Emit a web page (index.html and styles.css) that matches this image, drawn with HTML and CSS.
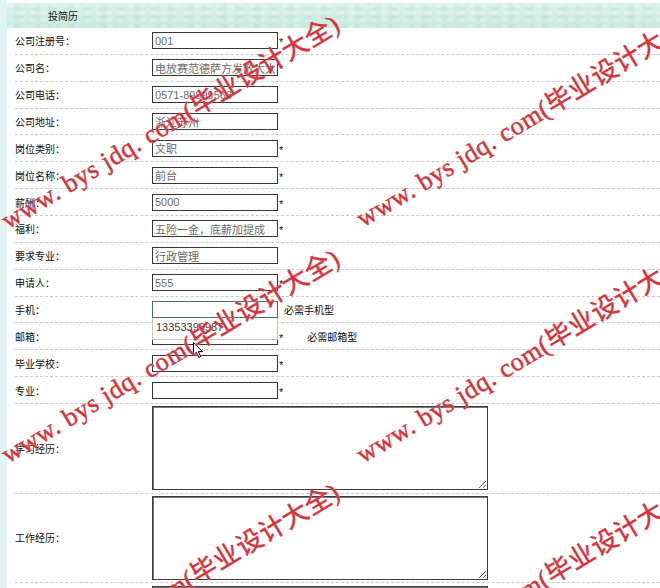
FILE: index.html
```html
<!DOCTYPE html>
<html lang="zh">
<head>
<meta charset="utf-8">
<title>投简历</title>
<link rel="stylesheet" href="styles.css">
</head>
<body>
<div class="page">
  <div class="strip"></div>
  <div class="main">
    <div class="header"><span>投简历</span></div>
    <div class="form">
      <div class="row"><span class="lbl">公司注册号：</span><div class="field"><input class="inp" value="001"><span class="req">*</span></div></div>
      <div class="row"><span class="lbl">公司名：</span><div class="field"><input class="inp" value="电放赛范德萨方发散大大大"><span class="req">*</span></div></div>
      <div class="row"><span class="lbl">公司电话：</span><div class="field"><input class="inp" value="0571-89899568"></div></div>
      <div class="row"><span class="lbl">公司地址：</span><div class="field"><input class="inp" value="浙江苏州"></div></div>
      <div class="row"><span class="lbl">岗位类别：</span><div class="field"><input class="inp" value="文职"><span class="req">*</span></div></div>
      <div class="row"><span class="lbl">岗位名称：</span><div class="field"><input class="inp" value="前台"><span class="req">*</span></div></div>
      <div class="row"><span class="lbl">薪酬：</span><div class="field"><input class="inp" value="5000"><span class="req">*</span></div></div>
      <div class="row"><span class="lbl">福利：</span><div class="field"><input class="inp" value="五险一金，底薪加提成"><span class="req">*</span></div></div>
      <div class="row"><span class="lbl">要求专业：</span><div class="field"><input class="inp" value="行政管理"></div></div>
      <div class="row"><span class="lbl">申请人：</span><div class="field"><input class="inp" value="555"><span class="req">*</span></div></div>
      <div class="row"><span class="lbl">手机：</span><div class="field"><input class="inp focus" value=""><span class="hint">必需手机型</span>
        <div class="suggest">13353396987</div></div></div>
      <div class="row"><span class="lbl">邮箱：</span><div class="field"><input class="inp" value=""><span class="req">*</span><span class="hint far">必需邮箱型</span></div></div>
      <div class="row"><span class="lbl">毕业学校：</span><div class="field"><input class="inp" value=""><span class="req">*</span></div></div>
      <div class="row"><span class="lbl">专业：</span><div class="field"><input class="inp" value=""><span class="req">*</span></div></div>
      <div class="row tall"><span class="lbl">学习经历：</span><div class="field"><textarea class="ta"></textarea></div></div>
      <div class="row tall"><span class="lbl">工作经历：</span><div class="field"><textarea class="ta"></textarea></div></div>
      <div class="row tall"><span class="lbl">获奖情况：</span><div class="field"><textarea class="ta"></textarea></div></div>
    </div>
  </div>
  <svg class="cursor" width="11" height="17" viewBox="0 0 11 17"><path d="M0.5 0.5 L0.5 13 L3.5 10.2 L5.8 15.5 L7.6 14.7 L5.4 9.6 L9.5 9.6 Z" fill="#fff" stroke="#000" stroke-width="1"/></svg>
  <div class="wm-layer">
    <span class="wm wa">www. bys jdq. com(毕业设计大全)</span>
    <span class="wm wb">www. bys jdq. com(毕业设计大全)</span>
    <span class="wm wc">www. bys jdq. com(毕业设计大全)</span>
    <span class="wm wd">www. bys jdq. com(毕业设计大全)</span>
    <span class="wm we">www. bys jdq. com(毕业设计大全)</span>
    <span class="wm wf">www. bys jdq. com(毕业设计大全)</span>
  </div>
</div>
</body>
</html>
```

FILE: styles.css
```css
html, body {
  margin: 0;
  padding: 0;
  background: #fff;
}
body {
  width: 660px;
  height: 588px;
  overflow: hidden;
  font-family: "Liberation Sans", "Noto Sans CJK SC", sans-serif;
  color: #111;
}
.page {
  position: relative;
  display: flex;
  width: 660px;
  height: 588px;
  overflow: hidden;
}
.strip {
  flex: none;
  width: 7px;
  background: #e0f5f1;
}
.main {
  flex: 1;
  padding-top: 3px;
}
.header {
  height: 25px;
  display: flex;
  align-items: center;
  padding-left: 41px;
  font-size: 10px;
  color: #111;
  border-top-left-radius: 3px;
  background-color: #d2eee5;
  background-image:
    radial-gradient(ellipse at 30% 40%, rgba(255,255,255,0.18) 0 3px, transparent 5px),
    radial-gradient(ellipse at 70% 60%, rgba(150,205,185,0.16) 0 4px, transparent 6px),
    linear-gradient(to bottom, #d8f1e9, #c9eadf);
  background-size: 11px 7px, 17px 9px, 100% 100%;
}
.form {
  padding-left: 8px;
}
.row {
  display: flex;
  align-items: center;
  height: 25.87px;
  border-bottom: 1px dashed #c9c9c9;
}
.row.tall {
  height: 88.6px;
}
.lbl {
  flex: none;
  width: 137px;
  font-size: 10px;
  color: #0c0c0c;
}
.field {
  position: relative;
  display: flex;
  align-items: center;
}
.inp {
  box-sizing: border-box;
  width: 126px;
  height: 17px;
  margin: 0;
  padding: 0 2px;
  border: 1px solid #363636;
  border-radius: 0;
  background: #fff;
  font: 11px "Liberation Sans", "Noto Sans CJK SC", sans-serif;
  color: #6a6a6a;
  outline: none;
}
.inp.focus {
  border-color: #4a6890;
}
.req {
  font-size: 11px;
  margin-left: 1px;
  padding-top: 3px;
  color: #111;
}
.hint {
  font-size: 10px;
  margin-left: 6px;
  color: #0c0c0c;
}
.hint.far {
  margin-left: 24px;
}
.suggest {
  position: absolute;
  left: 0;
  top: 17px;
  box-sizing: border-box;
  width: 126px;
  height: 22px;
  padding: 3px 0 0 3px;
  background: #fff;
  border: 1px solid #c4c4c4;
  border-top: none;
  font-size: 11px;
  color: #3a3a3a;
  z-index: 2;
}
.ta {
  box-sizing: border-box;
  width: 336px;
  height: 84px;
  margin: 0;
  border: 1px solid #3c3c3c;
  box-shadow: inset 1px 1px 0 #777;
  background: #fff;
  resize: both;
}
.cursor {
  position: absolute;
  left: 193px;
  top: 342px;
  z-index: 3;
}
.wm-layer {
  position: absolute;
  left: 0;
  top: 0;
  width: 660px;
  height: 588px;
  overflow: hidden;
  pointer-events: none;
  z-index: 4;
}
.wm {
  position: absolute;
  white-space: nowrap;
  font-family: "Liberation Serif", "Noto Sans CJK SC", serif;
  font-size: 26px;
  line-height: 30px;
  letter-spacing: 0.6px;
  color: #d5343c;
  -webkit-text-stroke: 0.5px #d5343c;
  transform-origin: 0 50%;
  transform: rotate(-31deg);
  text-shadow: 0 0 1px rgba(255,255,255,0.8);
}
.wa { left: 4px; top: 208px; }
.wb { left: 359px; top: 206px; }
.wc { left: 4px; top: 442px; }
.wd { left: 359px; top: 442px; }
.we { left: 4px; top: 676px; }
.wf { left: 359px; top: 676px; }
```
